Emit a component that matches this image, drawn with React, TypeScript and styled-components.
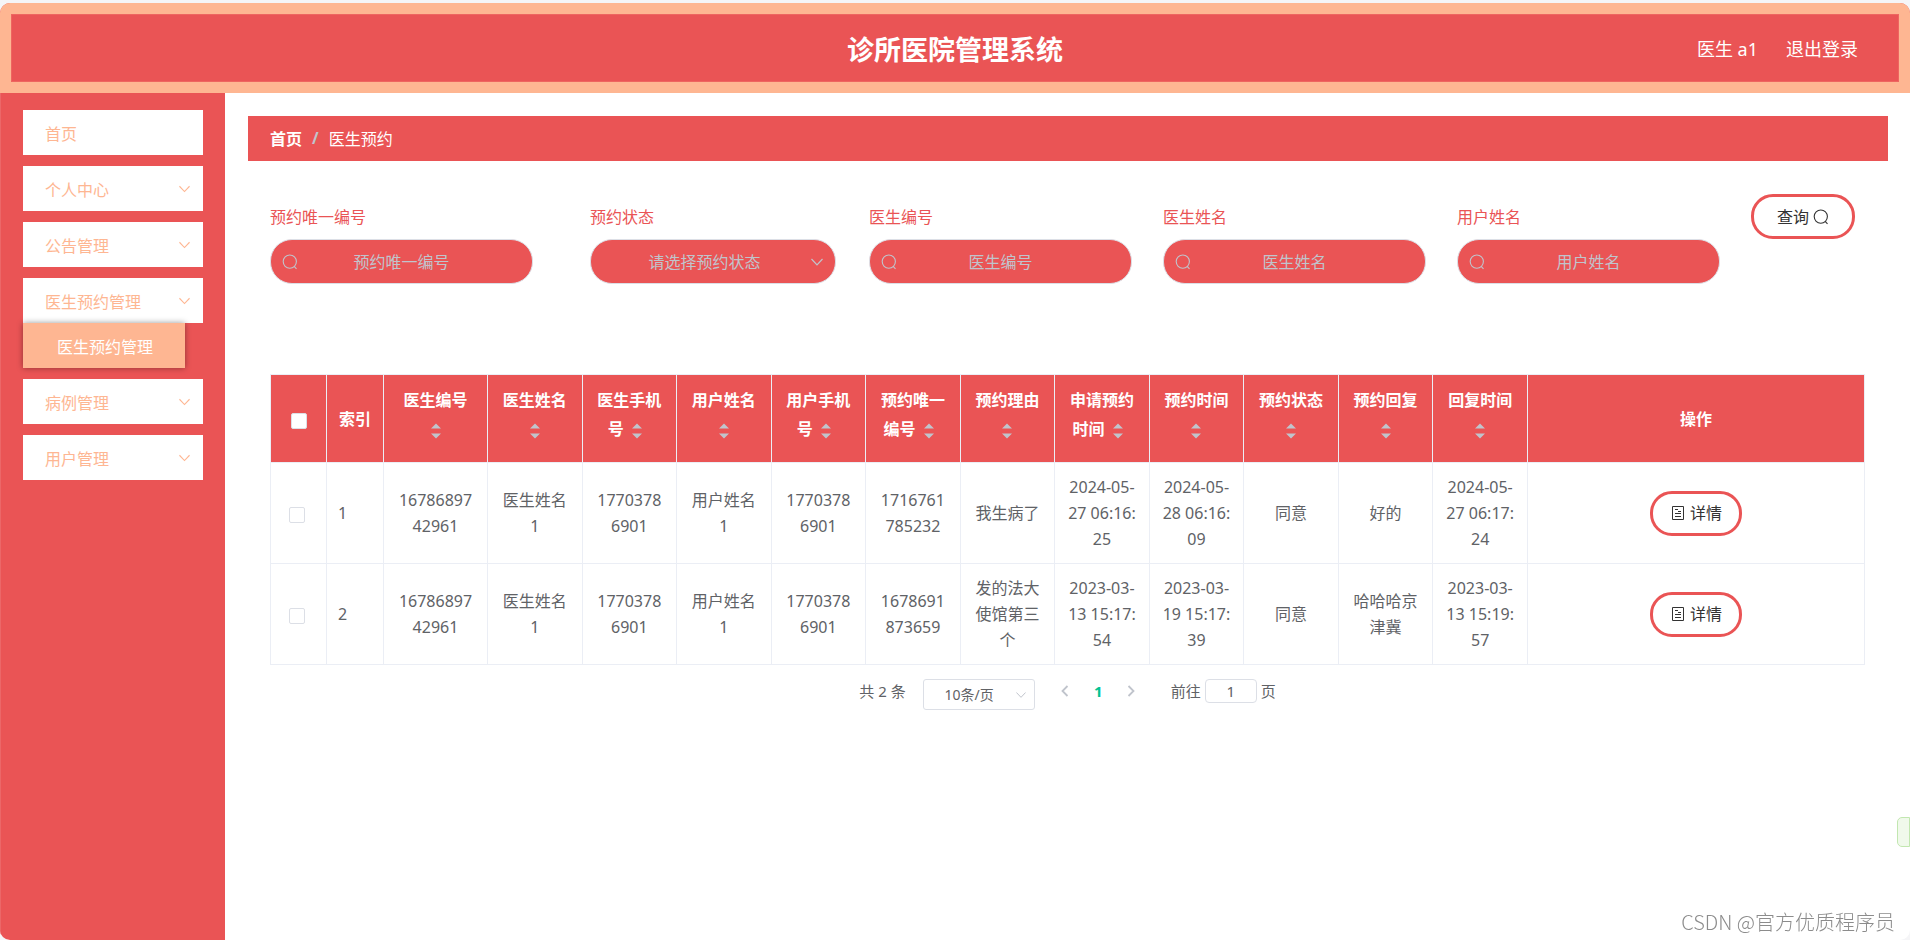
import React, { useId, useState } from "react";
import styled, { createGlobalStyle, css } from "styled-components";

const red = "#ea5455";
const peach = "#feb692";
const muted = "#c0c4cc";
const line = "#ebeef5";
const edge = "#dcdfe6";

const GlobalStyle = createGlobalStyle`
  * {
    box-sizing: border-box;
  }
  body {
    margin: 0;
    background: #f5f5f7;
    font-family: "Noto Sans", "Noto Sans CJK SC", sans-serif;
    font-size: 16px;
    color: #606266;
  }
  button,
  input,
  select {
    font: inherit;
    color: inherit;
    margin: 0;
  }
`;

const Page = styled.div`
  display: flex;
  flex-direction: column;
  min-height: 100vh;
  padding-top: 3px;
`;

const Frame = styled.div`
  flex: 1;
  display: flex;
  flex-direction: column;
  background: #fff;
  border-radius: 10px;
  overflow: hidden;
`;

const Header = styled.header`
  background: ${red};
  border: 11px solid ${peach};
  box-shadow: inset 0 0 0 1px #ee6560;
  height: 90px;
  display: grid;
  grid-template-columns: 1fr auto 1fr;
  align-items: center;
  color: #fff;
`;

const Title = styled.h1`
  grid-column: 2;
  margin: 0;
  padding-top: 3px;
  font-size: 27px;
  line-height: 36px;
  font-weight: 700;
`;

const Account = styled.div`
  display: flex;
  justify-content: flex-end;
  gap: 28px;
  padding: 1px 41px 0 0;
  font-size: 18px;
  line-height: 24px;
`;

const Logout = styled.a`
  color: inherit;
  text-decoration: none;
`;

const Body = styled.div`
  flex: 1;
  display: flex;
`;

const Sidebar = styled.nav`
  flex: 0 0 225px;
  background: ${red};
  border-left: 1px solid #ec6768;
  padding: 17px 22px;
  display: flex;
  flex-direction: column;
  gap: 11px;
`;

const MenuItem = styled.button`
  display: flex;
  align-items: center;
  justify-content: space-between;
  width: 100%;
  height: 45px;
  padding: 0 13px 0 22px;
  border: 0;
  background: #fff;
  color: ${peach};
  text-align: left;
  cursor: pointer;
`;

const SubItem = styled.a`
  display: flex;
  align-items: center;
  position: relative;
  width: 162px;
  height: 45px;
  padding-left: 34px;
  background: ${peach};
  color: #fff;
  text-decoration: none;
  box-shadow: 0 0 6px rgba(0, 0, 0, 0.4);
`;

const Main = styled.main`
  flex: 1;
  min-width: 0;
  padding: 23px 22px 23px 23px;
`;

const Breadcrumb = styled.nav`
  display: flex;
  align-items: center;
  gap: 10px;
  height: 45px;
  padding: 0 22px 2px;
  background: ${red};
  color: #fff;
`;

const Home = styled.a`
  color: inherit;
  font-weight: 700;
  text-decoration: none;
`;

const Slash = styled.span`
  color: ${muted};
  font-weight: 700;
`;

const Content = styled.div`
  padding: 33px 23px 0 22px;
`;

const Filters = styled.form`
  display: grid;
  grid-template-columns:
    minmax(0, 289px) minmax(0, 248px) repeat(3, minmax(0, 263px))
    auto;
  column-gap: 31px;
  align-items: start;
  justify-content: start;
`;

const Field = styled.div`
  display: flex;
  flex-direction: column;
`;

const Label = styled.label`
  height: 45px;
  padding-top: 2px;
  line-height: 43px;
  color: ${red};
`;

const Control = styled.div<{ $max: number }>`
  position: relative;
  max-width: ${(p) => p.$max}px;
  color: ${muted};
`;

const pill = css`
  display: block;
  width: 100%;
  height: 45px;
  border: 1px solid ${edge};
  border-radius: 22px;
  background: ${red};
  color: ${muted};
  text-align: center;
  outline: none;
`;

const TextInput = styled.input`
  ${pill}
  padding: 0 34px;
  &::placeholder {
    color: ${muted};
    opacity: 1;
  }
`;

const StatusSelect = styled.select`
  ${pill}
  appearance: none;
  padding: 0 34px 0 17px;
  text-align-last: center;
`;

const Affix = styled.span<{ $side: "left" | "right"; $inset: number }>`
  position: absolute;
  top: 0;
  bottom: 0;
  ${(p) => p.$side}: ${(p) => p.$inset}px;
  display: flex;
  align-items: center;
  pointer-events: none;
`;

const OutlineButton = styled.button<{ $pad: number }>`
  display: inline-flex;
  align-items: center;
  gap: 4px;
  height: 45px;
  padding: 0 ${(p) => p.$pad}px;
  border: 3px solid ${red};
  border-radius: 22px;
  background: #fff;
  color: #333;
  line-height: 24px;
  white-space: nowrap;
  vertical-align: middle;
  cursor: pointer;
`;

const Table = styled.table`
  width: 100%;
  margin-top: 90px;
  table-layout: fixed;
  border-collapse: collapse;
  border: 1px solid ${line};
`;

const Col = styled.col<{ $w?: number }>`
  ${(p) => p.$w && `width: ${p.$w}px;`}
`;

const HeadCell = styled.th<{ $sortable?: boolean }>`
  height: 88px;
  padding: ${(p) => (p.$sortable ? "0 11px 7px" : "2px 11px 0")};
  border: 1px solid ${line};
  background: ${red};
  color: #fff;
  font-weight: 700;
  line-height: 29px;
  text-align: center;
  word-break: break-all;
`;

const Cell = styled.td<{ $align?: "left" | "center"; $pad?: number }>`
  height: 101px;
  padding: 11px ${(p) => p.$pad ?? 11}px;
  border: 1px solid ${line};
  line-height: 26px;
  text-align: ${(p) => p.$align ?? "center"};
  word-break: break-all;
`;

const Tick = styled.input`
  appearance: none;
  display: inline-block;
  width: 16px;
  height: 16px;
  border: 1px solid ${edge};
  border-radius: 2px;
  background: #fff;
  vertical-align: middle;
  cursor: pointer;
  &:checked {
    background: ${peach};
  }
`;

const SortButton = styled.button`
  display: inline-flex;
  align-items: center;
  justify-content: center;
  width: 27px;
  height: 16px;
  padding: 0;
  border: 0;
  background: none;
  vertical-align: middle;
  cursor: pointer;
`;

const Pagination = styled.div`
  display: flex;
  justify-content: center;
  align-items: flex-start;
  margin-top: 14px;
  font-size: 15px;
  line-height: 24px;
`;

const PageSize = styled.div`
  position: relative;
  margin: 0 14px 0 17px;
  color: ${muted};
`;

const SizeSelect = styled.select`
  appearance: none;
  display: block;
  width: 112px;
  height: 31px;
  padding: 0 30px 0 11px;
  border: 1px solid ${edge};
  border-radius: 3px;
  background: #fff;
  color: #606266;
  font-size: 14px;
  text-align: center;
  text-align-last: center;
`;

const PageButton = styled.button<{ $current?: boolean }>`
  display: flex;
  align-items: center;
  justify-content: center;
  width: 33px;
  height: 24px;
  padding: 0;
  border: 0;
  background: none;
  color: ${(p) => (p.$current ? "#00c292" : muted)};
  font-weight: 700;
  cursor: pointer;
`;

const Jump = styled.label`
  display: flex;
  gap: 4px;
  margin-left: 23px;
`;

const JumpInput = styled.input`
  width: 52px;
  height: 24px;
  padding: 0 3px;
  border: 1px solid ${edge};
  border-radius: 4px;
  background: #fff;
  text-align: center;
`;

const SideTab = styled.div`
  position: fixed;
  right: 0;
  bottom: 93px;
  width: 13px;
  height: 30px;
  border: 1px solid #c2e7b0;
  border-radius: 5px 0 0 5px;
  background: #f0f9eb;
`;

const Watermark = styled.div`
  position: fixed;
  right: 15px;
  bottom: 4px;
  color: #8c8c8c;
  font-family: "Noto Sans CJK SC", sans-serif;
  font-size: 20px;
  font-weight: 300;
  line-height: 28px;
  text-shadow: -1px -1px 0 #fff;
`;

const SearchIcon = () => (
  <svg width="16" height="16" viewBox="0 0 16 16" fill="none" stroke="currentColor" strokeWidth="1.1" aria-hidden="true">
    <circle cx="7.8" cy="7.6" r="6.6" />
    <path d="M12.2 12.3L14.5 14.8" />
  </svg>
);

const ChevronDown = ({ size = 12 }: { size?: number }) => (
  <svg width={size} height="8" viewBox="0 0 12 8" fill="none" stroke="currentColor" strokeWidth="1.2" aria-hidden="true">
    <path d="M0.5 1L6 6.8L11.5 1" />
  </svg>
);

const PageArrow = ({ next }: { next?: boolean }) => (
  <svg width="8" height="12" viewBox="0 0 8 12" fill="none" stroke="currentColor" strokeWidth="1.8" aria-hidden="true">
    <path d={next ? "M1.5 1L6.5 6L1.5 11" : "M6.5 1L1.5 6L6.5 11"} />
  </svg>
);

const DocumentIcon = () => (
  <svg width="16" height="16" viewBox="0 0 16 16" fill="none" stroke="currentColor" aria-hidden="true">
    <path d="M2.5 1.5H13.5V14.5H2.5ZM5 4.5H8M5 8.5H11M5 11.5H11M8 6.5H11" />
  </svg>
);

const SortIcon = () => (
  <svg width="10" height="16" viewBox="0 0 10 16" fill={muted} aria-hidden="true">
    <path d="M0 5.5L5 0.5L10 5.5ZM0 10.5H10L5 15.5Z" />
  </svg>
);

const menu = [
  { name: "首页" },
  { name: "个人中心", opens: true },
  { name: "公告管理", opens: true },
  { name: "医生预约管理", opens: true, child: "医生预约管理" },
  { name: "病例管理", opens: true },
  { name: "用户管理", opens: true },
];

const columns = [
  "医生编号",
  "医生姓名",
  "医生手机号",
  "用户姓名",
  "用户手机号",
  "预约唯一编号",
  "预约理由",
  "申请预约时间",
  "预约时间",
  "预约状态",
  "预约回复",
  "回复时间",
];

const rows = [
  [
    "1678689742961",
    "医生姓名1",
    "17703786901",
    "用户姓名1",
    "17703786901",
    "1716761785232",
    "我生病了",
    "2024-05-27 06:16:25",
    "2024-05-28 06:16:09",
    "同意",
    "好的",
    "2024-05-27 06:17:24",
  ],
  [
    "1678689742961",
    "医生姓名1",
    "17703786901",
    "用户姓名1",
    "17703786901",
    "1678691873659",
    "发的法大使馆第三个",
    "2023-03-13 15:17:54",
    "2023-03-19 15:17:39",
    "同意",
    "哈哈哈京津冀",
    "2023-03-13 15:19:57",
  ],
];

function SearchField({ name }: { name: string }) {
  const id = useId();
  return (
    <Field>
      <Label htmlFor={id}>{name}</Label>
      <Control $max={263}>
        <TextInput id={id} type="text" placeholder={name} />
        <Affix $side="left" $inset={12}>
          <SearchIcon />
        </Affix>
      </Control>
    </Field>
  );
}

function StatusField() {
  const id = useId();
  return (
    <Field>
      <Label htmlFor={id}>预约状态</Label>
      <Control $max={246}>
        <StatusSelect id={id} defaultValue="">
          <option value="">请选择预约状态</option>
          <option value="yes">同意</option>
        </StatusSelect>
        <Affix $side="right" $inset={13}>
          <ChevronDown />
        </Affix>
      </Control>
    </Field>
  );
}

export default function App() {
  const [page, setPage] = useState("1");
  return (
    <Page>
      <GlobalStyle />
      <Frame>
        <Header>
          <Title>诊所医院管理系统</Title>
          <Account>
            <span>医生 a1</span>
            <Logout href="#logout">退出登录</Logout>
          </Account>
        </Header>
        <Body>
          <Sidebar>
            {menu.map((item) => (
              <div key={item.name}>
                <MenuItem type="button">
                  {item.name}
                  {item.opens && <ChevronDown size={11} />}
                </MenuItem>
                {item.child && <SubItem href="#appointments">{item.child}</SubItem>}
              </div>
            ))}
          </Sidebar>
          <Main>
            <Breadcrumb>
              <Home href="#home">首页</Home>
              <Slash>/</Slash>
              <span>医生预约</span>
            </Breadcrumb>
            <Content>
              <Filters onSubmit={(e) => e.preventDefault()}>
                <SearchField name="预约唯一编号" />
                <StatusField />
                <SearchField name="医生编号" />
                <SearchField name="医生姓名" />
                <SearchField name="用户姓名" />
                <OutlineButton type="submit" $pad={23}>
                  查询
                  <SearchIcon />
                </OutlineButton>
              </Filters>
              <Table>
                <colgroup>
                  <Col $w={56} />
                  <Col $w={57} />
                  <Col $w={104} />
                  {columns.slice(1).map((name) => (
                    <Col key={name} />
                  ))}
                  <Col $w={337} />
                </colgroup>
                <thead>
                  <tr>
                    <HeadCell>
                      <Tick type="checkbox" aria-label="全选" />
                    </HeadCell>
                    <HeadCell>索引</HeadCell>
                    {columns.map((name) => (
                      <HeadCell key={name} $sortable>
                        {name}
                        <SortButton type="button" aria-label={name}>
                          <SortIcon />
                        </SortButton>
                      </HeadCell>
                    ))}
                    <HeadCell>操作</HeadCell>
                  </tr>
                </thead>
                <tbody>
                  {rows.map((row, r) => (
                    <tr key={r}>
                      <Cell $align="left" $pad={18}>
                        <Tick type="checkbox" aria-label={`${r + 1}`} />
                      </Cell>
                      <Cell $align="left">{r + 1}</Cell>
                      {row.map((value, c) => (
                        <Cell key={columns[c]}>{value}</Cell>
                      ))}
                      <Cell>
                        <OutlineButton type="button" $pad={17}>
                          <DocumentIcon />
                          详情
                        </OutlineButton>
                      </Cell>
                    </tr>
                  ))}
                </tbody>
              </Table>
              <Pagination>
                <span>共 2 条</span>
                <PageSize>
                  <SizeSelect aria-label="10条/页">
                    <option>10条/页</option>
                  </SizeSelect>
                  <Affix $side="right" $inset={9}>
                    <ChevronDown size={10} />
                  </Affix>
                </PageSize>
                <PageButton type="button" aria-label="上一页">
                  <PageArrow />
                </PageButton>
                <PageButton type="button" $current>
                  1
                </PageButton>
                <PageButton type="button" aria-label="下一页">
                  <PageArrow next />
                </PageButton>
                <Jump>
                  前往
                  <JumpInput type="text" value={page} onChange={(e) => setPage(e.target.value)} />
                  页
                </Jump>
              </Pagination>
            </Content>
          </Main>
        </Body>
      </Frame>
      <SideTab />
      <Watermark>CSDN @官方优质程序员</Watermark>
    </Page>
  );
}
